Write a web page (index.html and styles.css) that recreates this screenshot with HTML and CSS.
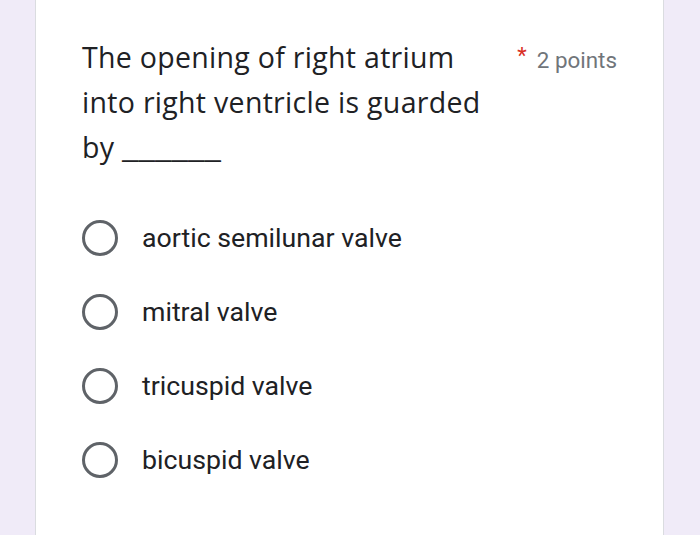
FILE: index.html
```html
<!DOCTYPE html>
<html>
<head>
<meta charset="utf-8">
<link rel="stylesheet" href="styles.css">
</head>
<body>
<div class="card">
  <div class="header">
    <div class="question">The opening of right atrium<br>into right ventricle is guarded<br>by <span class="blank">______</span></div>
    <div class="points"><span class="req">*</span><span class="pts">2 points</span></div>
  </div>
  <div class="options">
    <div class="option"><span class="radio"></span><span class="label">aortic semilunar valve</span></div>
    <div class="option"><span class="radio"></span><span class="label">mitral valve</span></div>
    <div class="option"><span class="radio"></span><span class="label">tricuspid valve</span></div>
    <div class="option"><span class="radio"></span><span class="label">bicuspid valve</span></div>
  </div>
</div>
</body>
</html>
```
FILE: styles.css
```css
html, body {
  margin: 0;
  padding: 0;
  height: 100%;
}
body {
  background: #f0ebf8;
  font-family: Roboto, "Liberation Sans", sans-serif;
}
.card {
  margin-left: 35px;
  width: 629px;
  height: 100%;
  box-sizing: border-box;
  background: #fff;
  border-left: 1px solid #dadce0;
  border-right: 1px solid #dadce0;
  padding: 35px 0 0 46px;
}
.header {
  display: flex;
  align-items: flex-start;
}
.question {
  white-space: nowrap;
  font-family: "Open Sans", sans-serif;
  font-size: 28.5px;
  line-height: 45px;
  color: #202124;
  letter-spacing: 0.3px;
}
.blank {
  display: inline-block;
  transform: scaleX(1.32);
  transform-origin: left center;
  letter-spacing: 0;
}
.points {
  margin-left: auto;
  margin-right: 46px;
  padding-top: 8px;
  display: flex;
  align-items: flex-start;
}
.req {
  color: #d93025;
  font-size: 22px;
  line-height: 22px;
  margin-right: 10px;
  margin-top: 2px;
}
.pts {
  color: #70757a;
  font-size: 22.4px;
  line-height: 34px;
  margin-top: 0;
}
.options {
  margin-top: 50px;
  display: flex;
  flex-direction: column;
  gap: 38px;
}
.option {
  display: flex;
  align-items: center;
  height: 36px;
}
.radio {
  width: 36px;
  height: 36px;
  box-sizing: border-box;
  border: 3.5px solid #5f6368;
  border-radius: 50%;
  flex: none;
}
.label {
  margin-left: 24px;
  font-size: 26.7px;
  color: #202124;
}
```
